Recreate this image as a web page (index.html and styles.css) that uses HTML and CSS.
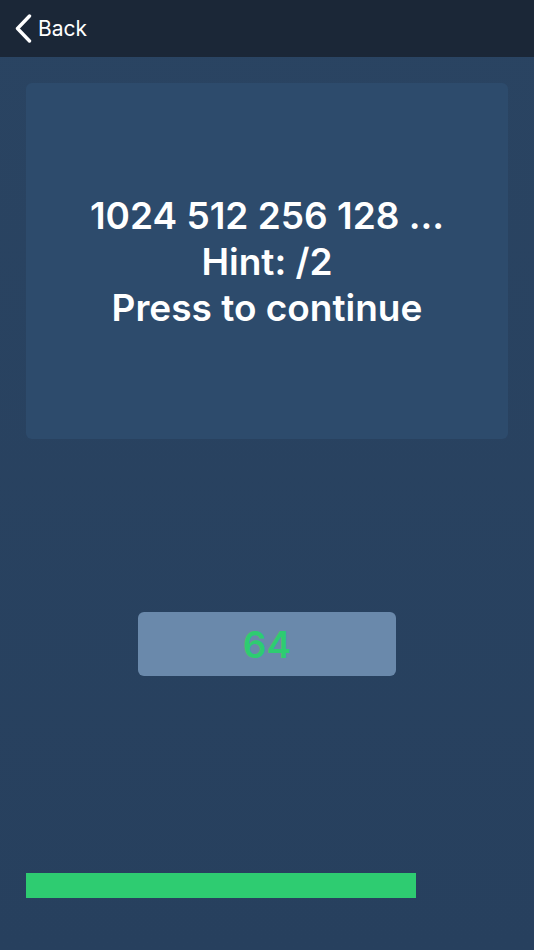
FILE: index.html
```html
<!DOCTYPE html>
<html lang="en">
<head>
  <meta charset="UTF-8">
  <meta name="viewport" content="width=device-width, initial-scale=1.0">
  <title>Sequence</title>
  <link rel="stylesheet" href="styles.css">
</head>
<body>
  <div class="nav-bar">
    <button class="back-btn">
      <svg class="back-icon" width="17" height="29" viewBox="0 0 17 29">
        <path d="M14.5 2 L2.5 14.5 L14.5 27" fill="none" stroke="#fff" stroke-width="3.4" stroke-linecap="round" stroke-linejoin="round"/>
      </svg>
      <span>Back</span>
    </button>
  </div>

  <div class="screen">
    <div class="question-card">
      <div class="question-text">
        1024 512 256 128 ...<br>
        Hint: /2<br>
        Press to continue
      </div>
    </div>

    <button class="answer-btn">64</button>

    <div class="progress">
      <div class="progress-fill" style="width: 81%;"></div>
    </div>
  </div>
</body>
</html>
```

FILE: styles.css
```css
html, body {
  margin: 0;
  padding: 0;
}

body {
  font-family: Inter, "Noto Sans", sans-serif;
  background: linear-gradient(#2a4462, #27405e);
  color: #fff;
  height: 950px;
  overflow: hidden;
}

.nav-bar {
  height: 57px;
  background-color: #1b2737;
  display: flex;
  align-items: center;
  padding-left: 15px;
}

.back-btn {
  display: flex;
  align-items: center;
  gap: 6px;
  background: none;
  border: none;
  padding: 0;
  color: #fff;
  font-family: inherit;
  font-size: 21px;
  cursor: pointer;
}

.back-icon {
  margin-top: -1px;
}

.screen {
  padding: 26px 26px 0;
  display: flex;
  flex-direction: column;
}

.question-card {
  height: 356px;
  background-color: #2d4b6c;
  border-radius: 6px;
  display: flex;
  align-items: center;
  justify-content: center;
  text-align: center;
}

.question-text {
  font-size: 37px;
  font-weight: 600;
  line-height: 46px;
  margin-top: 2px;
}

.answer-btn {
  align-self: center;
  width: 258px;
  height: 64px;
  margin-top: 173px;
  background-color: #6a89ab;
  border: none;
  border-radius: 6px;
  color: #2ecc71;
  font-family: inherit;
  font-size: 37px;
  font-weight: 600;
  cursor: pointer;
}

.progress {
  margin-top: 197px;
  height: 25px;
}

.progress-fill {
  height: 100%;
  background-color: #2ecc71;
}
```
